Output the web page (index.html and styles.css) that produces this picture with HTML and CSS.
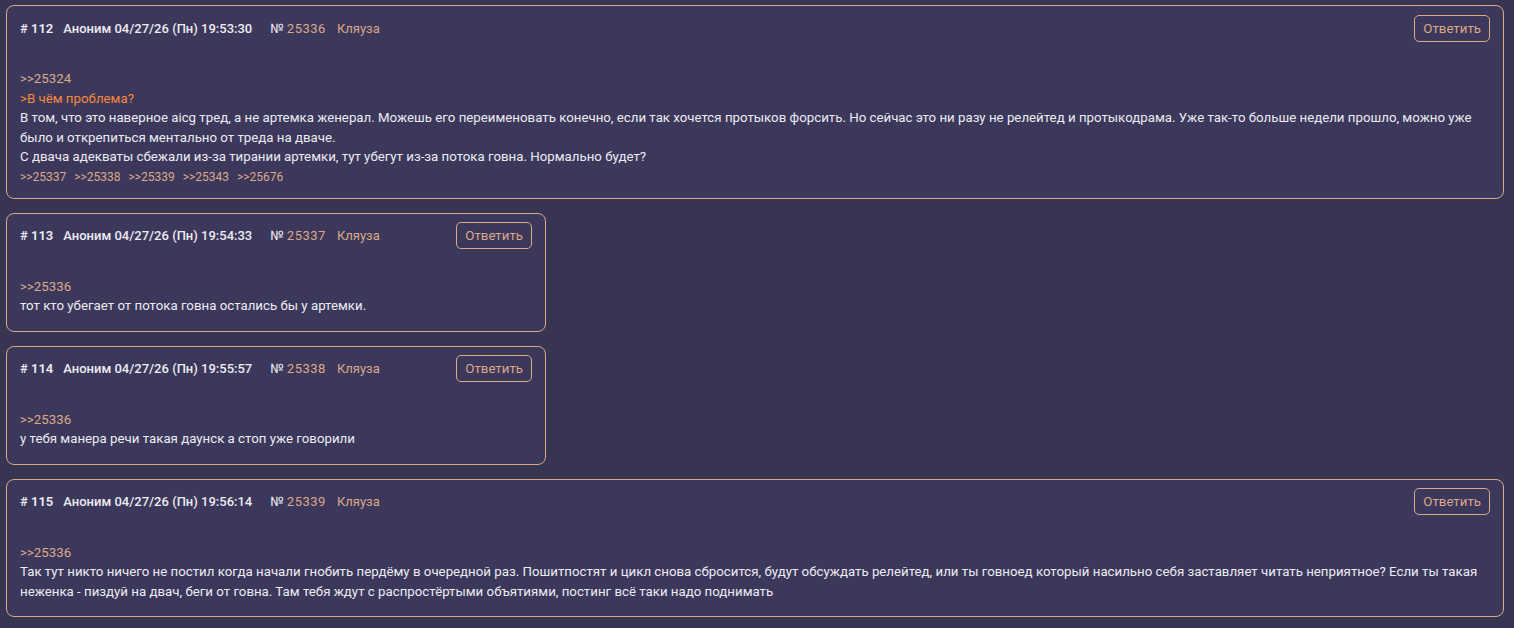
FILE: index.html
```html
<!DOCTYPE html>
<html lang="ru">

<head>
    <meta charset="utf-8">
    <title>Тред</title>
    <link rel="stylesheet" href="styles.css">
</head>

<body>
    <div class="thread">
        <div class="post">
            <div class="post-head">
                <span class="post-num"># 112</span>
                <span class="post-author">Аноним 04/27/26 (Пн) 19:53:30</span>
                <span class="post-id">№ <a href="#">25336</a></span>
                <a class="post-report" href="#">Кляуза</a>
                <button class="reply-btn">Ответить</button>
            </div>
            <div class="post-body">
                <a class="ref" href="#">&gt;&gt;25324</a><br>
                <span class="quote">&gt;В чём проблема?</span><br>
                В том, что это наверное aicg тред, а не артемка женерал. Можешь его переименовать конечно, если так хочется протыков форсить. Но сейчас это ни разу не релейтед и протыкодрама. Уже так-то больше недели прошло, можно уже было и открепиться ментально от треда на дваче.<br>
                С двача адекваты сбежали из-за тирании артемки, тут убегут из-за потока говна. Нормально будет?
            </div>
            <div class="post-replies">
                <a href="#">&gt;&gt;25337</a>
                <a href="#">&gt;&gt;25338</a>
                <a href="#">&gt;&gt;25339</a>
                <a href="#">&gt;&gt;25343</a>
                <a href="#">&gt;&gt;25676</a>
            </div>
        </div>

        <div class="post">
            <div class="post-head">
                <span class="post-num"># 113</span>
                <span class="post-author">Аноним 04/27/26 (Пн) 19:54:33</span>
                <span class="post-id">№ <a href="#">25337</a></span>
                <a class="post-report" href="#">Кляуза</a>
                <button class="reply-btn">Ответить</button>
            </div>
            <div class="post-body">
                <a class="ref" href="#">&gt;&gt;25336</a><br>
                тот кто убегает от потока говна остались бы у артемки.
            </div>
        </div>

        <div class="post">
            <div class="post-head">
                <span class="post-num"># 114</span>
                <span class="post-author">Аноним 04/27/26 (Пн) 19:55:57</span>
                <span class="post-id">№ <a href="#">25338</a></span>
                <a class="post-report" href="#">Кляуза</a>
                <button class="reply-btn">Ответить</button>
            </div>
            <div class="post-body">
                <a class="ref" href="#">&gt;&gt;25336</a><br>
                у тебя манера речи такая даунск а стоп уже говорили
            </div>
        </div>

        <div class="post">
            <div class="post-head">
                <span class="post-num"># 115</span>
                <span class="post-author">Аноним 04/27/26 (Пн) 19:56:14</span>
                <span class="post-id">№ <a href="#">25339</a></span>
                <a class="post-report" href="#">Кляуза</a>
                <button class="reply-btn">Ответить</button>
            </div>
            <div class="post-body">
                <a class="ref" href="#">&gt;&gt;25336</a><br>
                Так тут никто ничего не постил когда начали гнобить пердёму в очередной раз. Пошитпостят и цикл снова сбросится, будут обсуждать релейтед, или ты говноед который насильно себя заставляет читать неприятное? Если ты такая неженка - пиздуй на двач, беги от говна. Там тебя ждут с распростёртыми объятиями, постинг всё таки надо поднимать
            </div>
        </div>
    </div>
</body>

</html>
```

FILE: styles.css
```css
body {
    margin: 0;
    background-color: #383553;
    color: #ecebf2;
    font-family: Roboto, "Noto Sans", sans-serif;
    font-size: 13.27px;
}

a {
    color: #dba888;
    text-decoration: none;
}

.thread {
    display: flex;
    flex-direction: column;
    align-items: flex-start;
    gap: 14px;
    padding: 5px 10px 20px 6px;
}

.post {
    box-sizing: border-box;
    min-width: 540px;
    max-width: 100%;
    padding: 8px 13px 15px 13px;
    background-color: #3c385b;
    border: 1px solid #d9aa85;
    border-radius: 8px;
}

.post-head {
    display: flex;
    align-items: center;
    height: 28px;
    font-size: 13px;
}

.post-num {
    font-weight: 600;
    margin-right: 10px;
}

.post-author {
    font-weight: 500;
    margin-right: 18px;
}

.post-id {
    margin-right: 11px;
}

.post-id a {
    letter-spacing: 0.5px;
}

.reply-btn {
    margin-left: auto;
    height: 27px;
    padding: 0 8px;
    background: transparent;
    border: 1px solid #d9aa85;
    border-radius: 5px;
    color: #dba888;
    font-family: Roboto, "Noto Sans", sans-serif;
    font-size: 13.27px;
    cursor: pointer;
}

.post-body {
    margin-top: 27px;
    line-height: 19.5px;
}

.quote {
    color: #f5883a;
}

.post-replies {
    margin-top: 4px;
    font-size: 12px;
    line-height: 12px;
}

.post-replies a {
    margin-right: 5px;
}
```
